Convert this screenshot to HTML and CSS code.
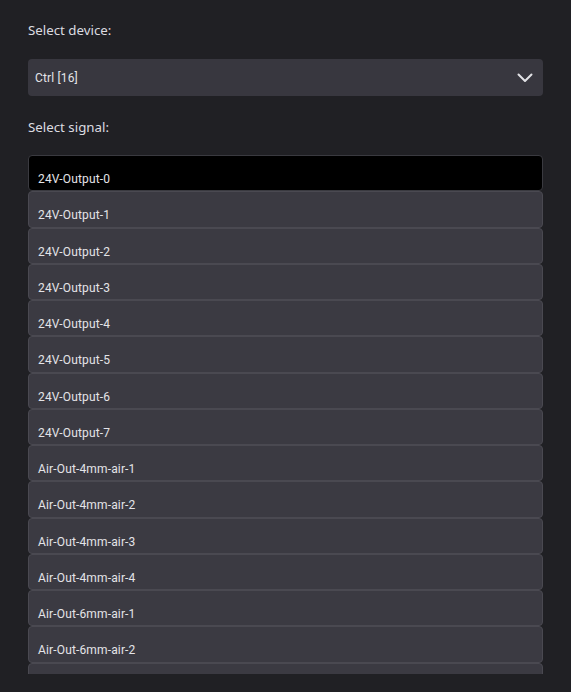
FILE: index.html
```html
<!DOCTYPE html>
<html>
<head>
<meta charset="utf-8">
<link rel="stylesheet" href="styles.css">
</head>
<body>
<div class="page">
  <div class="label">Select device:</div>
  <div class="select">
    <span class="select-value">Ctrl [16]</span>
    <svg class="chevron" width="16" height="10" viewBox="0 0 16 10"><polyline points="1.5,1.5 8,8 14.5,1.5" fill="none" stroke="#e2e2e6" stroke-width="2" stroke-linecap="round" stroke-linejoin="round"/></svg>
  </div>
  <div class="label label-signal">Select signal:</div>
  <div class="list">
    <div class="item active">24V-Output-0</div>
    <div class="item">24V-Output-1</div>
    <div class="item">24V-Output-2</div>
    <div class="item">24V-Output-3</div>
    <div class="item">24V-Output-4</div>
    <div class="item">24V-Output-5</div>
    <div class="item">24V-Output-6</div>
    <div class="item">24V-Output-7</div>
    <div class="item">Air-Out-4mm-air-1</div>
    <div class="item">Air-Out-4mm-air-2</div>
    <div class="item">Air-Out-4mm-air-3</div>
    <div class="item">Air-Out-4mm-air-4</div>
    <div class="item">Air-Out-6mm-air-1</div>
    <div class="item">Air-Out-6mm-air-2</div>
    <div class="item"></div>
  </div>
</div>
</body>
</html>
```
FILE: styles.css
```css
html, body {
  margin: 0;
  padding: 0;
  background: #202024;
  height: 100%;
}
.page {
  padding: 20px 28px 0 28px;
  display: flex;
  flex-direction: column;
  font-family: "Noto Sans", "Open Sans", sans-serif;
}
.label {
  color: #dcdce0;
  font-size: 13.3px;
  line-height: 20px;
  height: 20px;
}
.select {
  margin-top: 19px;
  height: 37px;
  box-sizing: border-box;
  background: #38373f;
  border-radius: 4px;
  display: flex;
  align-items: center;
  justify-content: space-between;
  padding: 0 10px 0 7px;
}
.select-value {
  font-family: Roboto, sans-serif;
  font-size: 12px;
  letter-spacing: 0.15px;
  color: #e4e4e8;
  padding-top: 1px;
}
.chevron {
  display: block;
}
.label-signal {
  margin-top: 21px;
}
.list {
  margin-top: 18px;
  height: 519px;
  overflow: hidden;
  display: flex;
  flex-direction: column;
}
.item {
  flex: 0 0 36.25px;
  height: 36.25px;
  box-sizing: border-box;
  border: 1px solid #4a4951;
  border-radius: 4px;
  background: #3b3a42;
  color: #e4e4e8;
  font-family: Roboto, sans-serif;
  font-size: 12px;
  letter-spacing: 0.15px;
  line-height: 14px;
  padding: 16px 9px 0 9px;
}
.item.active {
  background: #000000;
  border-color: #3a3a40;
}
```
